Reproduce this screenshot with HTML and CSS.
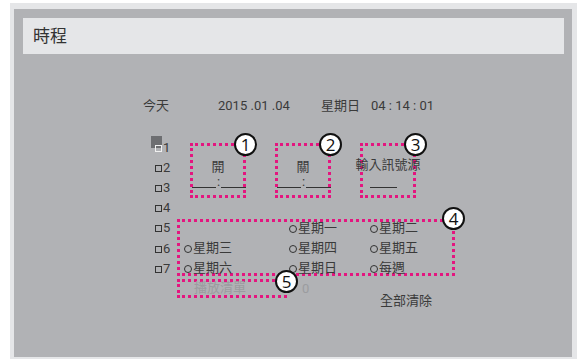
FILE: index.html
```html
<!DOCTYPE html>
<html lang="zh-Hant">
<head>
  <meta charset="UTF-8">
  <meta name="viewport" content="width=device-width, initial-scale=1">
  <title>時程</title>
  <link rel="stylesheet" href="styles.css">
</head>
<body>

  <div class="frame">
    <div class="panel">
      <div class="header">時程</div>

      <div class="today">
        <span class="today-label">今天</span>
        <span class="today-date">2015 .01 .04</span>
        <span class="today-day">星期日</span>
        <span class="today-time">04 : 14 : 01</span>
      </div>

      <div class="schedule">
        <ul class="slots">
          <li class="slot active"><span class="check"></span>1</li>
          <li class="slot"><span class="check"></span>2</li>
          <li class="slot"><span class="check"></span>3</li>
          <li class="slot"><span class="check"></span>4</li>
          <li class="slot"><span class="check"></span>5</li>
          <li class="slot"><span class="check"></span>6</li>
          <li class="slot"><span class="check"></span>7</li>
        </ul>

        <div class="editor">
          <div class="fields">
            <div class="mark field">
              <span class="callout">1</span>
              <div class="field-label">開</div>
              <div class="time"><span class="blank"></span><span class="colon">:</span><span class="blank"></span></div>
            </div>
            <div class="mark field">
              <span class="callout">2</span>
              <div class="field-label">關</div>
              <div class="time"><span class="blank"></span><span class="colon">:</span><span class="blank"></span></div>
            </div>
            <div class="mark field field-source">
              <span class="callout">3</span>
              <div class="field-label">輸入訊號源</div>
              <div class="time"><span class="blank"></span></div>
            </div>
          </div>

          <div class="mark days">
            <span class="callout callout-days">4</span>
            <div class="days-grid">
              <span></span>
              <span class="day"><span class="radio"></span>星期一</span>
              <span class="day"><span class="radio"></span>星期二</span>
              <span class="day"><span class="radio"></span>星期三</span>
              <span class="day"><span class="radio"></span>星期四</span>
              <span class="day"><span class="radio"></span>星期五</span>
              <span class="day"><span class="radio"></span>星期六</span>
              <span class="day"><span class="radio"></span>星期日</span>
              <span class="day"><span class="radio"></span>每週</span>
            </div>
          </div>

          <div class="bottom">
            <div class="mark playlist">
              <span class="callout callout-low">5</span>
              播放清單
            </div>
            <span class="count">0</span>
            <span class="clear">全部清除</span>
          </div>
        </div>
      </div>
    </div>
  </div>

</body>
</html>
```

FILE: styles.css
```css
body {
  font-family: 'Roboto', 'Noto Sans CJK TC', sans-serif;
  font-size: 13px;
  color: #3a3a3a;
  background-color: #ffffff;
  margin: 0;
  padding: 0;
}

.frame {
  margin: 3px 0 1px 10px;
  padding: 6px 5px 2px 4px;
  background-color: #e5e6e8;
}

.panel {
  height: 348px;
  box-sizing: border-box;
  padding: 9px 8px 0 9px;
  background-color: #b1b2b5;
}

.header {
  height: 36px;
  line-height: 36px;
  padding-left: 10px;
  font-size: 17px;
  color: #333;
  background-color: #e5e6e8;
}

/* fecha de hoy */
.today {
  display: flex;
  margin: 43px 0 0 120px;
  line-height: 18px;
  white-space: nowrap;
}

.today-label {
  width: 75px;
}

.today-date {
  width: 103px;
}

.today-day {
  width: 50px;
}

.schedule {
  display: flex;
  margin-top: 22px;
}

.slots {
  list-style: none;
  margin: 0 0 0 128px;
  padding: 0;
  width: 26px;
}

.slot {
  position: relative;
  display: flex;
  align-items: center;
  height: 20.2px;
}

.check {
  position: relative;
  z-index: 1;
  display: inline-block;
  width: 5px;
  height: 5px;
  margin: 2px 1px 0 4px;
  border: 1px solid #333;
}

.slot.active::before {
  content: "";
  position: absolute;
  left: 0;
  top: -1px;
  width: 11px;
  height: 12px;
  background-color: #6d6e71;
}

.slot.active .check {
  border-color: #f0f0f0;
}

.editor {
  flex: 1;
}

/* marcas rosadas */
.mark {
  position: relative;
  box-sizing: border-box;
  border: 3px dotted #e4157f;
}

.callout {
  position: absolute;
  top: -13px;
  right: -14px;
  width: 23px;
  height: 23px;
  box-sizing: border-box;
  border: 2px solid #111;
  border-radius: 50%;
  background-color: #fff;
  color: #111;
  font-family: 'Open Sans', sans-serif;
  font-size: 17px;
  line-height: 19px;
  text-align: center;
}

.callout-days {
  top: -15px;
  right: -13px;
}

.callout-low {
  top: -12px;
  right: -14px;
}

.fields {
  display: flex;
  margin-top: 6px;
  padding-left: 13px;
}

.field {
  width: 56px;
  height: 55px;
  padding-top: 13px;
}

.field + .field {
  margin-left: 29px;
}

.field-label {
  display: flex;
  justify-content: center;
  line-height: 16px;
  white-space: nowrap;
}

.field-source .field-label {
  margin-top: -2px;
  margin-bottom: 2px;
}

.time {
  display: flex;
  align-items: flex-end;
  height: 13px;
  margin: 0 -3px 0 -1px;
}

.blank {
  width: 24px;
  height: 0;
  border-bottom: 1px solid #333;
}

.blank:last-child {
  width: 25px;
}

.colon {
  width: 5px;
  line-height: 13px;
  text-align: center;
}

.field-source .time {
  margin: 0 0 0 7px;
}

.field-source .blank {
  width: 27px;
}

.days {
  width: 278px;
  height: 57px;
  margin-top: 21px;
}

.days-grid {
  display: grid;
  grid-template-columns: 105px 81px 1fr;
  row-gap: 4px;
  margin-top: -2px;
  padding-left: 3px;
  line-height: 16px;
}

.day {
  display: flex;
  align-items: center;
  white-space: nowrap;
}

.radio {
  display: inline-block;
  width: 6px;
  height: 6px;
  margin: 2px 1px 0 1px;
  border: 1px solid #333;
  border-radius: 50%;
}

.bottom {
  display: flex;
  align-items: flex-start;
  margin-top: 3px;
}

.playlist {
  width: 110px;
  height: 19px;
  padding-left: 14px;
  line-height: 11px;
  color: #9b9c9f;
}

.count {
  width: 78px;
  margin-left: 15px;
  line-height: 19px;
  color: #9b9c9f;
}

.clear {
  margin-top: 14px;
  line-height: 16px;
}
```
